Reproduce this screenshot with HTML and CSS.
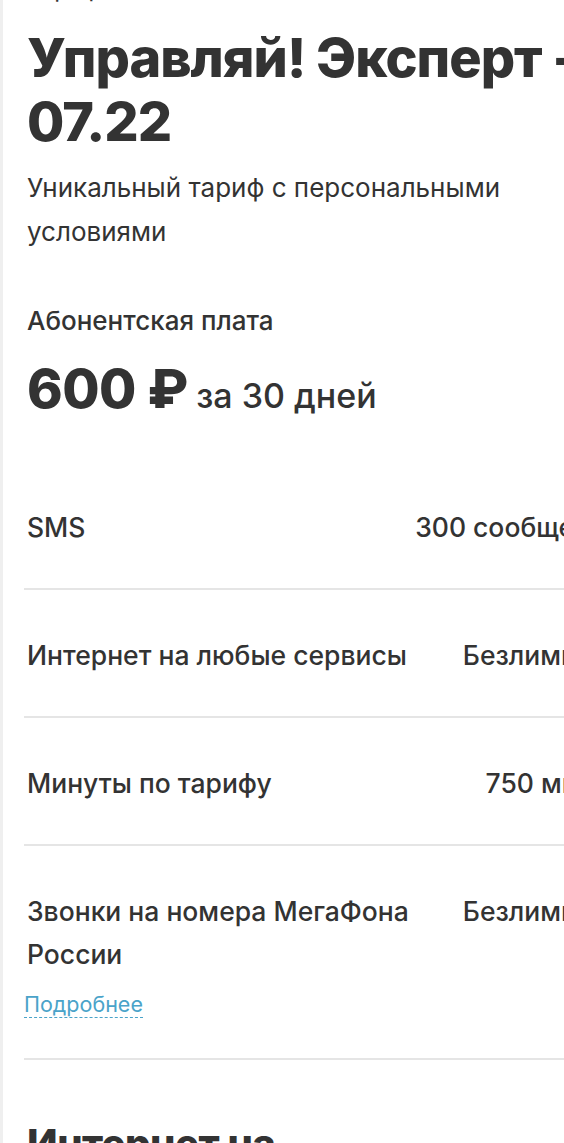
FILE: index.html
```html
<!DOCTYPE html>
<html lang="ru">
<head>
<meta charset="utf-8">
<title>Управляй! Эксперт - 07.22</title>
<link rel="stylesheet" href="styles.css">
</head>
<body>
<div class="page">
  <main class="card">
    <div class="crumb">Тариф</div>
    <h1 class="title">Управляй! Эксперт - 07.22</h1>
    <p class="subtitle">Уникальный тариф с персональными условиями</p>

    <section class="fee">
      <div class="fee-label">Абонентская плата</div>
      <div class="fee-price"><span class="fee-sum">600 ₽</span> <span class="fee-period">за 30 дней</span></div>
    </section>

    <ul class="opts">
      <li class="opt">
        <div class="opt-name">SMS</div>
        <div class="opt-value">300 сообщений</div>
      </li>
      <li class="opt">
        <div class="opt-name">Интернет на любые сервисы</div>
        <div class="opt-value">Безлимитно</div>
      </li>
      <li class="opt">
        <div class="opt-name">Минуты по тарифу</div>
        <div class="opt-value">750 минут</div>
      </li>
      <li class="opt">
        <div class="opt-name">Звонки на номера МегаФона России
          <div class="opt-more"><a class="more-link" href="#">Подробнее</a></div>
        </div>
        <div class="opt-value">Безлимитно</div>
      </li>
    </ul>

    <h2 class="section-title">Интернет на любые сервисы</h2>
  </main>
</div>
</body>
</html>
```

FILE: styles.css
```css
html, body {
  margin: 0;
  padding: 0;
  overflow: hidden;
  background: #efefef;
}

body {
  font-family: Inter, "Noto Sans", "DejaVu Sans", sans-serif;
  color: #333333;
}

.page {
  padding-left: 3px;
}

.card {
  background: #ffffff;
  width: 660px;
  min-height: 1200px;
  padding: 0 0 0 24px;
  box-sizing: border-box;
}

.crumb {
  font-size: 24px;
  line-height: 30px;
  margin-top: -26px;
  color: #333333;
}

.title {
  margin: 22px 0 0;
  font-weight: 800;
  font-size: 54px;
  line-height: 64px;
  letter-spacing: -1px;
  width: 600px;
}

.subtitle {
  margin: 12px 0 0;
  font-size: 26px;
  line-height: 44px;
  width: 590px;
}

.fee {
  margin-top: 50px;
}

.fee-label {
  font-size: 26px;
  font-weight: 500;
  line-height: 34px;
}

.fee-price {
  margin-top: 19px;
  line-height: 64px;
}

.fee-sum {
  font-size: 54px;
  font-weight: 800;
  letter-spacing: -0.5px;
}

.fee-period {
  font-size: 34px;
  font-weight: 500;
  margin-left: 4px;
}

.opts {
  list-style: none;
  margin: 28px 0 0 -3px;
  padding: 0;
  width: 598px;
}

.opt {
  display: grid;
  grid-template-columns: 1fr auto;
  gap: 24px;
  padding: 44px 0 39px 3px;
  border-bottom: 2px solid #e5e5e5;
  font-size: 26.5px;
  font-weight: 500;
  line-height: 43px;
}

.opt-value {
  text-align: right;
  white-space: nowrap;
}

.opt-more {
  margin-top: 11px;
  margin-left: -3px;
  line-height: 30px;
}

.more-link {
  font-size: 21.5px;
  font-weight: 400;
  color: #4aa3c9;
  text-decoration: none;
  border-bottom: 1px dashed #4aa3c9;
}

.section-title {
  margin: 60px 0 0;
  font-weight: 800;
  font-size: 40px;
  line-height: 48px;
  letter-spacing: -0.5px;
  width: 340px;
}
```
